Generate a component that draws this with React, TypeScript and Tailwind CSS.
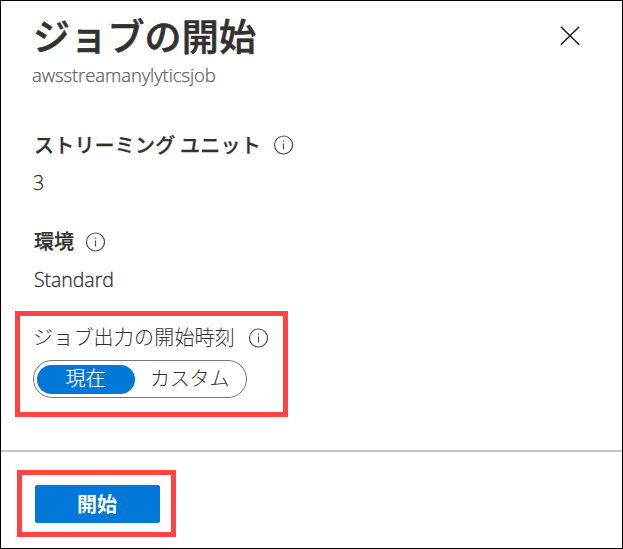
const latin = "font-['Open_Sans','Noto_Sans_CJK_JP',sans-serif]";
const japanese = "font-['Noto_Sans_CJK_JP',sans-serif]";

function InfoIcon() {
  return (
    <svg className="block size-5 shrink-0" viewBox="0 0 20 20" fill="none" stroke="#505050" aria-hidden="true">
      <circle cx="10.5" cy="10" r="9" strokeWidth="1.2" />
      <path d="M10.5 8.5V14.5" strokeWidth="1.2" />
      <circle cx="10.5" cy="6" r="0.8" fill="#505050" stroke="none" />
    </svg>
  );
}

export default function App() {
  return (
    <main className={`flex h-[549px] w-[623px] flex-col overflow-hidden border border-black bg-white text-[#323130] ${japanese}`}>
      <header className="flex h-[94px] justify-between pr-[42px] pl-[31px]">
        <div>
          <h1 className="mt-[9px] ml-px h-[52px] text-[37px] leading-[50px] font-medium tracking-[0.2px] whitespace-nowrap [-webkit-text-stroke:0.6px_#323130]">ジョブの開始</h1>
          <p className={`h-[26px] text-[18.5px] leading-[26px] font-light tracking-[-0.1px] text-[#606060] [-webkit-text-stroke:0.25px_#606060] ${latin}`}>awsstreamanylyticsjob</p>
        </div>
        <button type="button" aria-label="閉じる" className="mt-[25px] size-5">
          <svg className="block size-5" viewBox="0 0 20 20" fill="none" stroke="#111" strokeWidth="1.4">
            <path d="M.8 .8L19.2 18.8M19.2 .8L.8 18.8" />
          </svg>
        </button>
      </header>

      <section className="mt-[34px] flex h-[68px] flex-col pl-8">
        <div className="flex h-8 items-center gap-[12px]">
          <h2 className="w-[228px] pl-px text-[20px] leading-8 font-medium tracking-[0.2px] whitespace-nowrap [-webkit-text-stroke:0.25px_#323130]">ストリーミング ユニット</h2>
          <InfoIcon />
        </div>
        <p className={`mt-[6px] h-8 text-[19.5px] leading-8 font-light [-webkit-text-stroke:0.3px_#323130] ${latin}`}>3</p>
      </section>

      <section className="mt-[29px] flex h-[70px] flex-col pl-8">
        <div className="flex h-8 items-center gap-[11px]">
          <h2 className="h-8 pl-px text-[20px] leading-[30px] font-medium [-webkit-text-stroke:0.25px_#323130]">環境</h2>
          <InfoIcon />
        </div>
        <p className={`mt-[6px] h-8 pl-px text-[19.5px] leading-8 font-light tracking-[-0.05px] [-webkit-text-stroke:0.3px_#323130] ${latin}`}>Standard</p>
      </section>

      <section className="mt-[15px] ml-[14px] flex h-[106px] w-[273px] shrink-0 flex-col border-[5px] border-[#ff4343] pt-[6px] pl-[13px]">
        <div className="flex h-8 items-center gap-[12px]">
          <h2 className="h-8 w-[203px] text-[20px] leading-[30px] font-light tracking-[0.2px] whitespace-nowrap">ジョブ出力の開始時刻</h2>
          <InfoIcon />
        </div>
        <div className="mt-[6px] flex h-[38px] w-[214px] items-center rounded-full border border-[#777] pl-[3px] text-[20px] leading-[26px] font-light">
          <button type="button" className="h-[29px] w-[98px] rounded-full bg-[#0078d7] pr-px pb-[3px] text-white [-webkit-text-stroke:0.2px_white]">現在</button>
          <button type="button" className="ml-[15px] h-[29px] pb-[3px] tracking-[-0.2px] whitespace-nowrap">カスタム</button>
        </div>
      </section>

      <footer className="mt-[33px] flex grow border-t-2 border-[#c5c5c5] pt-[18px] pl-[16px]">
        <div className="h-[67px] w-[159px] border-[5px] border-[#ff4343] pt-[10px] pl-[13px]">
          <button type="button" className="h-[38px] w-[125px] rounded-[2px] bg-[#0078d7] pr-px pb-px text-[20px] leading-[37px] font-bold text-white">開始</button>
        </div>
      </footer>
    </main>
  );
}
